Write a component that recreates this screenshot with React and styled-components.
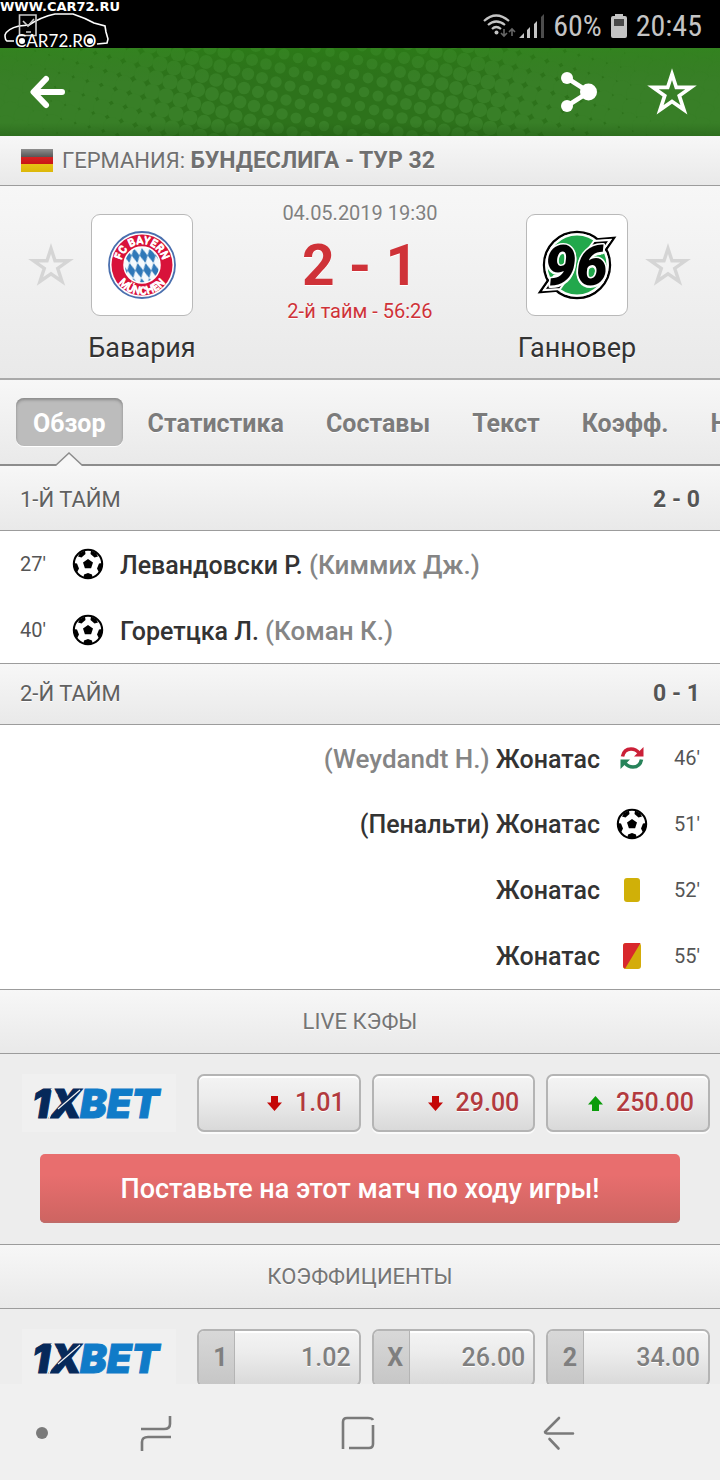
import React from "react";
import styled, { createGlobalStyle, css } from "styled-components";

const GlobalStyle = createGlobalStyle`
  *, *::before, *::after { box-sizing: border-box; }
  body {
    margin: 0;
    background: #f0f0f0;
    color: #333;
    font-family: Roboto, "Noto Sans", sans-serif;
  }
  button { font: inherit; color: inherit; border: 0; padding: 0; background: none; cursor: pointer; }
  a { color: inherit; text-decoration: none; }
  h1, h2, p, ul { margin: 0; padding: 0; font-weight: 400; }
  ul { list-style: none; }
  svg { display: block; flex: none; overflow: visible; }
`;

const bar = css`
  background: linear-gradient(#f7f7f7, #e9e9e9);
  text-shadow: 0 1px 0 #fff;
`;

const Screen = styled.div`
  display: flex;
  flex-direction: column;
  height: 100vh;
`;

const StatusBar = styled.header`
  display: flex;
  justify-content: space-between;
  align-items: center;
  height: 48px;
  flex: none;
  background: #000;
  color: #c4c4c4;
`;

const Watermark = styled.div`
  align-self: flex-start;
  height: 48px;
`;

const SiteName = styled.div`
  font: 700 13px/14px "DejaVu Sans", sans-serif;
  color: #fff;
`;

const StatusItems = styled.div`
  display: flex;
  align-items: center;
  gap: 9px;
  padding: 4px 18px 0 0;
  font-family: "Roboto Condensed", Roboto, sans-serif;
  font-size: 30px;
  line-height: 36px;
`;

const Reception = styled.div`
  display: flex;
  gap: 4px;
`;

const AppBar = styled.nav`
  position: relative;
  display: flex;
  align-items: center;
  gap: 48px;
  height: 88px;
  flex: none;
  padding: 0 22px 0 28px;
  background: #37802a;
`;

const Halftone = styled.svg`
  position: absolute;
  inset: 0;
  width: 100%;
  height: 100%;
  overflow: hidden;
`;

const IconButton = styled.button`
  position: relative;
  margin-right: ${(p) => (p.$first ? "auto" : "0")};
`;

const Content = styled.main`
  flex: 1;
  min-height: 0;
  overflow-y: auto;
  scrollbar-width: none;
  background: #ededed;
`;

const League = styled.h1`
  ${bar}
  display: flex;
  align-items: center;
  gap: 9px;
  height: 50px;
  padding: 0 21px;
  border-bottom: 1px solid #9c9c9c;
  font-size: 22px;
  line-height: 28px;
  color: #707070;
  b { font-weight: 700; font-size: 23px; }
`;

const MatchHead = styled.section`
  ${bar}
  display: grid;
  grid-template-columns: 1fr auto 1fr;
  height: 194px;
  padding-top: 28px;
  border-bottom: 2px solid #a9a9a9;
`;

const Team = styled.div`
  display: grid;
  grid-template-columns: ${(p) => (p.$away ? "102px 48px" : "48px 102px")};
  justify-content: ${(p) => (p.$away ? "end" : "start")};
  align-content: start;
  align-items: center;
  column-gap: 16px;
  row-gap: 15px;
  padding: 0 28px 0 27px;
`;

const Crest = styled.div`
  display: grid;
  place-items: center;
  height: 102px;
  background: #fff;
  border: 1px solid #b9b9b9;
  border-radius: 9px;
`;

const TeamName = styled.h2`
  grid-row: 2;
  grid-column: ${(p) => (p.$away ? 1 : 2)};
  justify-self: center;
  font-size: 27px;
  line-height: 34px;
  white-space: nowrap;
`;

const Score = styled.div`
  display: flex;
  flex-direction: column;
  align-items: center;
  margin-top: -14px;
  color: #cf3238;
  font-size: 20px;
  line-height: 26px;
`;

const Kickoff = styled.time`
  color: #808080;
`;

const Result = styled.strong`
  margin-top: 8px;
  font-size: 57px;
  line-height: 64px;
`;

const Tabs = styled.div`
  ${bar}
  display: flex;
  gap: 8px;
  height: 86px;
  padding: 18px 16px;
  overflow: hidden;
  box-shadow: inset 0 -2px 0 #8c8c8c;
`;

const Tab = styled.button`
  position: relative;
  flex: none;
  height: 48px;
  padding: 4px 17px 0;
  border-radius: 8px;
  font-size: 25px;
  font-weight: 700;
  line-height: 44px;
  color: ${(p) => (p.$active ? "#fff" : "#7b7b7b")};
  text-shadow: ${(p) => (p.$active ? "none" : "0 1px 0 #fff")};
  ${(p) =>
    p.$active &&
    css`
      background: #bcbcbc;
      box-shadow: inset 0 2px 3px #8a8a8a, 0 1px 0 #fff;
    `}
`;

const Pointer = styled.svg`
  position: absolute;
  left: 50%;
  margin-left: -14px;
  top: 54px;
`;

const HalfTitle = styled.div`
  ${bar}
  display: flex;
  justify-content: space-between;
  align-items: center;
  height: ${(p) => (p.$first ? 65 : 61)}px;
  padding: ${(p) => (p.$first ? "4px" : "0")} 20px 0;
  border-bottom: 1px solid #9c9c9c;
  font-size: 22px;
  line-height: 28px;
  color: #606060;
  b { font-size: 23px; color: #555; }
`;

const Events = styled.ul`
  background: #fff;
  border-bottom: 1px solid #9c9c9c;
`;

const Event = styled.li`
  display: flex;
  flex-direction: ${(p) => (p.$away ? "row-reverse" : "row")};
  align-items: center;
  height: 66px;
  padding: 0 20px;
  font-size: 25px;
  font-weight: 500;
  line-height: 32px;
`;

const Minute = styled.span`
  width: 36px;
  font-size: 20px;
  font-weight: 400;
  color: #555;
  text-align: ${(p) => (p.$away ? "right" : "left")};
`;

const EventIcon = styled.span`
  display: grid;
  place-items: center;
  width: 64px;
`;

const EventText = styled.span`
  padding-top: 2px;
`;

const Muted = styled.span`
  font-size: 26px;
  color: #858585;
`;

const BlockTitle = styled.h2`
  ${bar}
  display: grid;
  place-items: center;
  height: 64px;
  padding-top: 1px;
  border-bottom: 1px solid #9c9c9c;
  font-size: 22px;
  line-height: 28px;
  color: #757575;
`;

const OddsBlock = styled.section`
  padding-bottom: 21px;
  border-bottom: 1px solid #9c9c9c;
`;

const OddsRow = styled.div`
  display: grid;
  grid-template-columns: 176px repeat(3, 1fr);
  column-gap: 11px;
  padding: 20px 10px 22px;
`;

const BookmakerLink = styled.a`
  display: grid;
  place-items: center;
  margin: 0 10px 0 12px;
  background: #f0f0f0;
`;

const Odd = styled.button`
  display: flex;
  align-items: center;
  justify-content: flex-end;
  gap: 13px;
  height: 58px;
  padding-right: ${(p) => (p.$live ? 14 : 8)}px;
  border: 2px solid #b4b4b4;
  border-radius: 7px;
  background: linear-gradient(#f4f4f4, #ececec 40%, #d9d9d9);
  box-shadow: 0 2px 0 #fbfbfb, inset 0 2px 0 #fff;
  font-size: 25px;
  font-weight: 500;
  line-height: 32px;
  color: ${(p) => (p.$live ? "#b23a3e" : "#7f7f7f")};
  text-shadow: 0 1px 0 #fff;
`;

const Outcome = styled.span`
  display: grid;
  place-items: center;
  align-self: stretch;
  width: 36px;
  margin-right: auto;
  padding-left: 8px;
  border-right: 1px solid #b4b4b4;
  border-radius: 5px 0 0 5px;
  background: linear-gradient(#d8d8d8, #c6c6c6);
  font-weight: 700;
  text-shadow: none;
`;

const BetButton = styled.button`
  display: block;
  width: calc(100% - 80px);
  height: 69px;
  margin: 0 40px;
  border-radius: 5px;
  background: linear-gradient(#e86e6e 30%, #cd6461);
  box-shadow: inset 0 -2px 0 #c06a68;
  color: #fff;
  font-size: 27px;
  font-weight: 500;
`;

const SystemNav = styled.nav`
  display: flex;
  align-items: center;
  height: 96px;
  flex: none;
  padding: 2px 145px 0 36px;
  background: #f0f0f0;
  color: #7a7a7a;
`;

const SystemKeys = styled.div`
  display: flex;
  flex: 1;
  justify-content: space-between;
  margin-left: 92px;
`;

const dots = [];
for (let i = -10; i < 60; i++) {
  for (let j = -30; j < 14; j++) {
    const x = i * 14 - j * 4;
    const y = i * 4 + j * 14 - 60;
    if (x > -15 && x < 735 && y > -15 && y < 103) {
      const d = Math.abs(x - 335 - (y - 44) / 4);
      dots.push([x, y, Math.min(10.5, 4.8 + d / 58)]);
    }
  }
}

function HeaderPattern() {
  return (
    <Halftone viewBox="0 0 720 88" preserveAspectRatio="xMidYMid slice" aria-hidden="true">
      <defs>
        <linearGradient id="shade" x1="0" y1="0" x2="0" y2="1">
          <stop offset="0" stopColor="#2a8a12" stopOpacity=".35" />
          <stop offset=".4" stopColor="#2a7a12" stopOpacity="0" />
          <stop offset=".85" stopColor="#1c5010" stopOpacity="0" />
          <stop offset="1" stopColor="#1c5010" stopOpacity=".35" />
        </linearGradient>
      </defs>
      <rect width="720" height="88" fill="#2d721b" />
      {dots.map(([x, y, r]) => (
        <circle key={`${x},${y}`} cx={x} cy={y} r={r} fill="#387f27" />
      ))}
      <rect width="720" height="88" fill="url(#shade)" />
    </Halftone>
  );
}

const CarLogo = () => (
  <svg width="112" height="34" viewBox="0 0 112 34" fill="none" stroke="#fff" strokeWidth="1.6">
    <path d="M14 27H7q-2-1-2-6 2-6 14-9l10-1q12-8 26-11h18q12 4 21 9l11 3 1 6 2 7-1 4-10 1" />
    <path d="M19.500 1h16.500v20.500H19.500zM23 7l5 5 6-7M26 18h5" stroke="#ccc" />
    <text x="15" y="33" fill="#fff" stroke="none" fontFamily="Lato, sans-serif" fontSize="17">CAR72.RO</text>
    <circle cx="22" cy="27" r="3" fill="#fff" stroke="none" />
    <circle cx="90" cy="27" r="3" fill="#fff" stroke="none" />
  </svg>
);

const Wifi = () => (
  <svg width="32" height="24" viewBox="0 0 32 24" fill="none" stroke="#c4c4c4" strokeWidth="2.200">
    <path d="M1 7Q13-4 26 7M5 11q8-7 17 0M9 15q4-4 9 0" />
    <circle cx="13.500" cy="18.500" r="2" fill="#c4c4c4" stroke="none" />
    <path d="M21 15v7m-3-3l3 3 3-3M29 22v-7m-3 3l3-3 3 3" stroke="#666" strokeWidth="1.600" />
  </svg>
);

const Signal = () => (
  <svg width="25" height="24" viewBox="0 0 25 24" fill="#c4c4c4">
    <path d="M0 24l5-5v5zM8 24v-8l3-3v11zM15 24V10l3-3v17z" />
    <path d="M22 24V3l3-3v24z" fill="#4c4c4c" />
  </svg>
);

const Battery = () => (
  <svg width="16" height="24" viewBox="0 0 16 24">
    <path d="M4 0h8v2h2q2 0 2 2v18q0 2-2 2H2q-2 0-2-2V4q0-2 2-2h2z" fill="#c4c4c4" />
    <path d="M3 5h10v7H3z" fill="#4a4a4a" />
  </svg>
);

const BackArrow = () => (
  <svg width="38" height="36" viewBox="0 0 38 36" fill="none" stroke="#fff" strokeWidth="6" strokeLinecap="round" strokeLinejoin="round">
    <path d="M18 5L5.500 18 18 31M6 18h28" />
  </svg>
);

const ShareIcon = () => (
  <svg width="38" height="42" viewBox="0 0 38 42" fill="#fff">
    <path d="M7 7l22 14L7 35" fill="none" stroke="#fff" strokeWidth="4.500" />
    <circle cx="7" cy="7" r="6" />
    <circle cx="7" cy="35" r="6" />
    <circle cx="28.500" cy="21" r="8.500" />
  </svg>
);

const Star = ({ color = "#d5d5d5", size = 48 }) => (
  <svg width={size} height={size} viewBox="0 0 48 48" fill="none" stroke={color} strokeWidth="3.400" strokeMiterlimit="8">
    <path d="M24 7.500l4 12.300H41.500L30.700 27.400 35 40.500 24 32.800l-11 7.700 4.300-13.100L6.500 19.800H20z" />
  </svg>
);

const Flag = () => (
  <svg width="32" height="23" viewBox="0 0 32 23">
    <defs>
      <linearGradient id="gloss" x1="0" y1="0" x2="0" y2="1">
        <stop offset="0" stopColor="#fff" stopOpacity=".4" />
        <stop offset=".35" stopColor="#fff" stopOpacity=".1" />
        <stop offset="1" stopColor="#000" stopOpacity=".08" />
      </linearGradient>
    </defs>
    <path d="M0 0h32v8H0z" fill="#444" />
    <path d="M0 8h32v7H0z" fill="#d00a0a" />
    <path d="M0 15h32v8H0z" fill="#f0c80a" />
    <path d="M0 0h32v23H0z" fill="url(#gloss)" />
  </svg>
);

const BayernCrest = () => (
  <svg width="68" height="68" viewBox="0 0 68 68">
    <defs>
      <pattern id="lozenge" width="8" height="15" patternUnits="userSpaceOnUse" patternTransform="translate(2 2) skewX(14)">
        <rect width="8" height="15" fill="#f5fafd" />
        <path d="M4 0l4 7.500L4 15 0 7.500z" fill="#2f78b8" />
      </pattern>
      <path id="arc-top" d="M12.500 34a21.500 21.500 0 0 1 43 0" />
      <path id="arc-bottom" d="M5 34a29 29 0 0 0 58 0" />
    </defs>
    <circle cx="34" cy="34" r="33" fill="#fff" stroke="#4a6fae" strokeWidth="1.800" />
    <circle cx="34" cy="34" r="30.500" fill="#d8123a" />
    <circle cx="34" cy="34" r="18" fill="url(#lozenge)" stroke="#fff" strokeWidth="1.500" />
    <g fill="#fff" fontFamily="Roboto, sans-serif" fontWeight="700" textAnchor="middle">
      <text fontSize="11"><textPath href="#arc-top" startOffset="50%">FC BAYERN</textPath></text>
      <text fontSize="11"><textPath href="#arc-bottom" startOffset="50%">MÜNCHEN</textPath></text>
    </g>
  </svg>
);

const HannoverCrest = () => (
  <svg width="78" height="70" viewBox="0 0 78 70">
    <g fill="#fff" stroke="#000" strokeWidth="2.400">
      <circle cx="39" cy="35" r="33" />
      <path d="M52 10l24-2-9 13M26 60L2 62l9-13" />
    </g>
    <circle cx="39" cy="35" r="31.800" fill="#fff" />
    <path d="M50 11l24-2-11 15M28 59L5 60.800l11-14" fill="#fff" />
    <circle cx="39" cy="35" r="29.500" fill="#22a84c" />
    <path d="M46 25L56 11l16-1-10 14zM32 45L22 59 6 60l10-14z" fill="#000" stroke="#fff" strokeWidth="2" />
    <text
      x="38"
      y="55"
      textAnchor="middle"
      fontFamily="Roboto, sans-serif"
      fontWeight="900"
      fontStyle="italic"
      fontSize="56"
      stroke="#fff"
      strokeWidth="3"
      strokeLinejoin="round"
      paintOrder="stroke"
    >
      96
    </text>
  </svg>
);

const Ball = () => (
  <svg width="32" height="32" viewBox="0 0 32 32">
    <circle cx="16" cy="16" r="14.200" fill="#fff" stroke="#000" strokeWidth="2" />
    <path
      d="M16 11l5 3.600-1.900 5.700h-6.200L11 14.600zM8 5l5-2.500.5 3.500-4 3.500-3.500-1zM24 5l-5-2.500-.5 3.500 4 3.500 3.500-1zM1.500 15l3.500.5 2 5-2 4-2.500-3zM30.500 15l-3.500.5-2 5 2 4 2.500-3zM12 26.500l4-1.500 4 1.500.5 3q-4.500 1.500-9 0z"
    />
  </svg>
);

const SwapIcon = () => (
  <svg width="24" height="24" viewBox="0 0 24 24" fill="none" strokeWidth="3.600">
    <path d="M2.500 10.500Q4 3 11 3q5 0 8 4" stroke="#cb2038" />
    <path d="M23.500 1v9.500H14z" fill="#cb2038" />
    <path d="M21.500 13.500q-1.500 7.500-8.500 7.500-5 0-8-4" stroke="#27835a" />
    <path d="M.5 23v-9.500H10z" fill="#27835a" />
  </svg>
);

const YellowCard = () => (
  <svg width="18" height="24" viewBox="0 0 18 24">
    <rect x="1" width="16" height="24" rx="3" fill="#d0b008" />
  </svg>
);

const SecondYellowCard = () => (
  <svg width="18" height="26" viewBox="0 0 18 26">
    <rect width="18" height="26" rx="3" fill="#d4ac0a" />
    <path d="M3 0h14.500L2 25.800Q0 25 0 23V3q0-3 3-3z" fill="#d8282c" />
  </svg>
);

const Trend = ({ up }) => (
  <svg width="15" height="15" viewBox="0 0 15 15" fill={up ? "#0a9c0a" : "#c40808"}>
    <path d={up ? "M7.500 0L15 8.500h-4V15H4V8.500H0z" : "M7.500 15L0 6.500h4V0h7v6.500h4z"} />
  </svg>
);

const XbetLogo = () => (
  <svg width="130" height="30" viewBox="0 0 130 30" role="img" aria-label="1XBET">
    <g fontFamily="Inter, sans-serif" fontWeight="900" fontStyle="italic" fontSize="40">
      <text x="-2" y="30" fill="#06295a" stroke="#06295a">1X</text>
      <text x="46" y="30" fill="#107bc8" stroke="#107bc8">BET</text>
    </g>
    <path d="M15 31L23 7l-6-6M24 21L46 2" stroke="#f0f0f0" strokeWidth="1.200" fill="none" />
  </svg>
);

const RecentsKey = () => (
  <svg width="32" height="36" viewBox="0 0 32 36" fill="none" stroke="currentColor" strokeWidth="2.600">
    <path d="M1 14h23q6 0 6-5V1M31 22H8q-6 0-6 5v9" />
  </svg>
);

const HomeKey = () => (
  <svg width="34" height="34" viewBox="0 0 34 34" fill="none" stroke="currentColor" strokeWidth="2.600">
    <path d="M2 33V6q0-4 4-4h21q4 0 5 2M32 9v19q0 4-4 4H8" />
  </svg>
);

const BackKey = () => (
  <svg width="32" height="34" viewBox="0 0 32 34" fill="none" stroke="currentColor" strokeWidth="2.600" strokeLinecap="round" strokeLinejoin="round">
    <path d="M16 2L2 16q0 1 2 1.500h26M6.500 23l9 9.500" />
  </svg>
);

const tabs = ["Обзор", "Статистика", "Составы", "Текст", "Коэфф.", "Новости"];

const firstHalf = [
  { minute: "27'", icon: <Ball />, player: "Левандовски Р.", note: "(Киммих Дж.)" },
  { minute: "40'", icon: <Ball />, player: "Горетцка Л.", note: "(Коман К.)" },
];

const secondHalf = [
  { minute: "46'", icon: <SwapIcon />, player: "Жонатас", note: "(Weydandt H.)" },
  { minute: "51'", icon: <Ball />, player: "(Пенальти) Жонатас" },
  { minute: "52'", icon: <YellowCard />, player: "Жонатас" },
  { minute: "55'", icon: <SecondYellowCard />, player: "Жонатас" },
];

const liveOdds = [
  { value: "1.01", up: false },
  { value: "29.00", up: false },
  { value: "250.00", up: true },
];

const preMatchOdds = [
  { outcome: "1", value: "1.02" },
  { outcome: "X", value: "26.00" },
  { outcome: "2", value: "34.00" },
];

function EventRow({ event, away }) {
  const note = event.note && <Muted>{event.note}</Muted>;
  return (
    <Event $away={away}>
      <Minute $away={away}>{event.minute}</Minute>
      <EventIcon>{event.icon}</EventIcon>
      <EventText>
        {away && note} {event.player} {!away && note}
      </EventText>
    </Event>
  );
}

export default function App() {
  return (
    <Screen>
      <GlobalStyle />
      <StatusBar>
        <Watermark>
          <SiteName>WWW.CAR72.RU</SiteName>
          <CarLogo />
        </Watermark>
        <StatusItems>
          <Reception>
            <Wifi />
            <Signal />
          </Reception>
          <span>60%</span>
          <Battery />
          <span>20:45</span>
        </StatusItems>
      </StatusBar>

      <AppBar>
        <HeaderPattern />
        <IconButton $first aria-label="Назад"><BackArrow /></IconButton>
        <IconButton aria-label="Поделиться"><ShareIcon /></IconButton>
        <IconButton aria-label="В избранное"><Star color="#fff" size={52} /></IconButton>
      </AppBar>

      <Content>
        <League>
          <Flag />
          <span>ГЕРМАНИЯ: <b>БУНДЕСЛИГА - ТУР 32</b></span>
        </League>

        <MatchHead>
          <Team>
            <IconButton aria-label="Бавария в избранное"><Star /></IconButton>
            <Crest><BayernCrest /></Crest>
            <TeamName>Бавария</TeamName>
          </Team>
          <Score>
            <Kickoff>04.05.2019 19:30</Kickoff>
            <Result>2 - 1</Result>
            <span>2-й тайм - 56:26</span>
          </Score>
          <Team $away>
            <Crest><HannoverCrest /></Crest>
            <IconButton aria-label="Ганновер в избранное"><Star /></IconButton>
            <TeamName $away>Ганновер</TeamName>
          </Team>
        </MatchHead>

        <Tabs>
          {tabs.map((name, i) => (
            <Tab key={name} $active={i === 0}>
              {name}
              {i === 0 && (
                <Pointer width="28" height="16" viewBox="0 0 28 16">
                  <path d="M0 14L14 1l14 13v2H0z" fill="#f7f7f7" />
                  <path d="M0 14L14 1l14 13" fill="none" stroke="#8c8c8c" strokeWidth="1.500" />
                </Pointer>
              )}
            </Tab>
          ))}
        </Tabs>

        <HalfTitle $first><span>1-Й ТАЙМ</span><b>2 - 0</b></HalfTitle>
        <Events>
          {firstHalf.map((e) => <EventRow key={e.minute} event={e} />)}
        </Events>
        <HalfTitle><span>2-Й ТАЙМ</span><b>0 - 1</b></HalfTitle>
        <Events>
          {secondHalf.map((e) => <EventRow key={e.minute} event={e} away />)}
        </Events>

        <BlockTitle>LIVE КЭФЫ</BlockTitle>
        <OddsBlock>
          <OddsRow>
            <BookmakerLink href="#1xbet"><XbetLogo /></BookmakerLink>
            {liveOdds.map((o) => (
              <Odd key={o.value} $live><Trend up={o.up} />{o.value}</Odd>
            ))}
          </OddsRow>
          <BetButton>Поставьте на этот матч по ходу игры!</BetButton>
        </OddsBlock>

        <BlockTitle>КОЭФФИЦИЕНТЫ</BlockTitle>
        <OddsRow>
          <BookmakerLink href="#1xbet"><XbetLogo /></BookmakerLink>
          {preMatchOdds.map((o) => (
            <Odd key={o.outcome}><Outcome>{o.outcome}</Outcome>{o.value}</Odd>
          ))}
        </OddsRow>
      </Content>

      <SystemNav>
        <svg width="12" height="12" viewBox="0 0 12 12"><circle cx="6" cy="6" r="6" fill="currentColor" /></svg>
        <SystemKeys>
          <IconButton aria-label="Недавние"><RecentsKey /></IconButton>
          <IconButton aria-label="Домой"><HomeKey /></IconButton>
          <IconButton aria-label="Назад"><BackKey /></IconButton>
        </SystemKeys>
      </SystemNav>
    </Screen>
  );
}
